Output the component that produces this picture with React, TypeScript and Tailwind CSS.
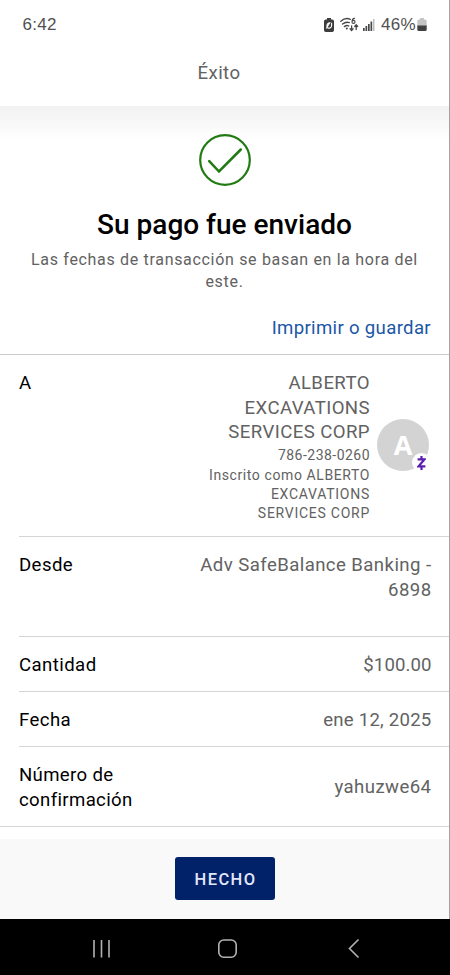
import type { ReactNode } from "react";

function StatusBar() {
  return (
    <div className="flex h-12 items-center justify-between pl-[22.5px] pr-[22px] pt-px text-[17px] text-[#505050]">
      <span className="pt-px font-['Liberation_Sans',sans-serif] text-[17px] tracking-[0.3px]">6:42</span>
      <div className="flex items-center">
        <svg width="10" height="14" viewBox="0 0 10 14" fill="none">
          <path d="M3 0h4v1.5h1.2A1.8 1.8 0 0 1 10 3.3v8.9A1.8 1.8 0 0 1 8.2 14H1.8A1.8 1.8 0 0 1 0 12.200V3.300A1.800 1.800 0 0 1 1.800 1.500H3z" fill="#3d3d3d" />
          <path d="M7.600 4.800v2.700A2.600 2.600 0 0 1 3.200 9.400L2.200 10.400M3 9.200V7.600A2.800 2.800 0 0 1 5.800 4.800z" stroke="#fff" strokeWidth="1.100" fill="none" />
        </svg>
        <svg className="ml-[6px]" width="19" height="15" viewBox="0 0 19 15" fill="none" stroke="#484848" strokeLinecap="round">
          <path d="M.8 4.200Q5.500.200 10.300 2.300M2.500 7Q6 4.400 9.300 5.600M4.400 9.600Q6.500 8 8.600 8.900" strokeWidth="1.400" />
          <circle cx="6.800" cy="11.500" r="1" fill="#484848" stroke="none" />
          <path d="M14.600 1.300Q12.400 1.200 12.100 4.200M12 4.900a1.500 1.500 0 1 1 3 0a1.500 1.500 0 1 1-3 0" strokeWidth="1.200" />
          <path d="M11.600 8.800v4.500m-1.500-1.500 1.500 1.700 1.500-1.700M16.200 12.500V8m-1.500 1.500 1.500-1.700 1.500 1.700" strokeWidth="1.300" />
        </svg>
        <svg className="ml-[4px]" width="12" height="12" viewBox="0 0 12 12" fill="#484848">
          <rect x="0" y="9" width="1.700" height="3" />
          <rect x="2.500" y="7" width="1.700" height="5" />
          <rect x="5" y="5" width="1.700" height="7" />
          <rect x="7.500" y="2.500" width="1.700" height="9.500" />
          <rect x="10" y="0" width="1.500" height="12" fill="#bdbdbd" />
        </svg>
        <span className="ml-[6px] w-[35px] whitespace-nowrap pt-[2px] font-['Liberation_Sans',sans-serif] text-[17px] tracking-[0.3px]">46%</span>
        <svg className="ml-px" width="10" height="14" viewBox="0 0 10 14">
          <path d="M3 0h4v1.500h1.200A1.500 1.500 0 0 1 9.700 3v5H.3V3a1.500 1.500 0 0 1 1.500-1.500H3z" fill="#c4c4c4" />
          <path d="M.3 7.500h9.400v4A1.500 1.500 0 0 1 8.200 13H1.800A1.500 1.500 0 0 1 .3 11.500z" fill="#404040" />
        </svg>
      </div>
    </div>
  );
}

function Row({ label, className, children }: { label: ReactNode; className: string; children: ReactNode }) {
  return (
    <div className={`ml-[19px] flex justify-between border-b border-[#d4d4d4] pr-[17.5px] ${className}`}>
      <span className="text-black">{label}</span>
      <span className="text-right">{children}</span>
    </div>
  );
}

function Avatar() {
  return (
    <div className="relative ml-[7px] mt-[48px] flex size-[52px] shrink-0 items-center justify-center rounded-full bg-[#d3d3d3]">
      <span className="font-['Open_Sans',sans-serif] text-[27px] font-bold tracking-[0px] text-white">A</span>
      <span className="absolute left-[35px] top-[34px] flex size-[19px] items-center justify-center rounded-full bg-white">
        <svg width="9" height="14" viewBox="0 0 9 14" fill="none" stroke="#5b1fb0" strokeWidth="2.200">
          <path d="M.6 3.400H7.400L1.600 10.400H8.400M4.500 0v3.400M4.500 10.400V14" />
        </svg>
      </span>
    </div>
  );
}

export default function App() {
  return (
    <div className="flex h-[975px] w-[450px] flex-col overflow-hidden bg-white font-[Roboto,sans-serif] text-[18.6px] leading-[24.5px] tracking-[0.42px] text-[#626262]">
      <div className="flex h-[919px] flex-col border-r border-[#a3a3a3]">
        <header className="h-[106px] shrink-0">
          <StatusBar />
          <h1 className="pt-[13px] pr-[11px] text-center">Éxito</h1>
        </header>
        <section className="flex h-[249px] shrink-0 flex-col items-center border-b border-[#cccccc] bg-linear-to-b from-[#f2f2f2] to-white to-[34px] pt-[28px]">
          <svg width="52" height="52" viewBox="0 0 52 52" fill="none" stroke="#217a12" strokeWidth="2.200">
            <circle cx="26" cy="26" r="24.800" />
            <path d="M10.200 27.200 20 37.500 41.800 15.500" strokeWidth="2.500" strokeLinecap="round" />
          </svg>
          <h2 className="mt-[22px] text-[28px] font-medium leading-[34px] tracking-[0px] text-black">Su pago fue enviado</h2>
          <p className="mt-[7px] w-[400px] text-center text-[16px] leading-[22px] tracking-[0.68px]">Las fechas de transacción se basan en la hora del este.</p>
          <a className="mt-[23px] mr-[18px] self-end tracking-[0.33px] text-[#1b57a6]">Imprimir o guardar</a>
        </section>
        <main className="h-[484px] shrink-0">
          <div className="ml-[19px] flex h-[182px] border-b border-[#d4d4d4] pt-[16px]">
            <span className="flex-1 text-black">A</span>
            <div className="flex flex-col items-end text-right">
              <div className="w-[160px]">ALBERTO<br />EXCAVATIONS SERVICES CORP</div>
              <div className="text-[14px] leading-[21px] tracking-[0.47px]">786-238-0260</div>
              <div className="text-[14px] leading-[19px] tracking-[0.6px]">Inscrito como ALBERTO<br /><span className="tracking-[0.74px]">EXCAVATIONS<br />SERVICES CORP</span></div>
            </div>
            <Avatar />
            <div className="w-[20px]" />
          </div>
          <Row label="Desde" className="h-[100px] pt-[16px]">Adv SafeBalance Banking -<br />6898</Row>
          <Row label="Cantidad" className="h-[55px] items-center pt-[2px]"><span className="tracking-[0.08px]">$100.00</span></Row>
          <Row label="Fecha" className="h-[55px] items-center pt-[2px]"><span className="tracking-[0.22px]">ene 12, 2025</span></Row>
          <div className="flex h-[80px] items-center justify-between border-b border-[#d4d4d4] pl-[19px] pr-[17.5px] pt-[2px]">
            <span className="tracking-[0.35px] text-black">Número de<br />confirmación</span>
            <span>yahuzwe64</span>
          </div>
        </main>
        <footer className="flex h-[80px] shrink-0 justify-center bg-[#f9f9f9] pt-[18px]">
          <button className="h-[43px] w-[100px] rounded-[3px] bg-[#012169] pl-[2px] pt-[3px] text-[16.5px] font-medium tracking-[1.4px] text-[#e1e8fa]">HECHO</button>
        </footer>
      </div>
      <nav className="h-[56px] shrink-0 bg-black">
        <svg width="450" height="56" viewBox="0 0 450 56" fill="none" stroke="#b2b2b2" strokeWidth="1.600">
          <path d="M94 21v17.500M101.500 21v17.500M109 21v17.500" />
          <rect x="218.800" y="21" width="17.400" height="17.200" rx="5" />
          <path d="M358.500 20.500 349.500 29.500 358.500 38.500" />
        </svg>
      </nav>
    </div>
  );
}
